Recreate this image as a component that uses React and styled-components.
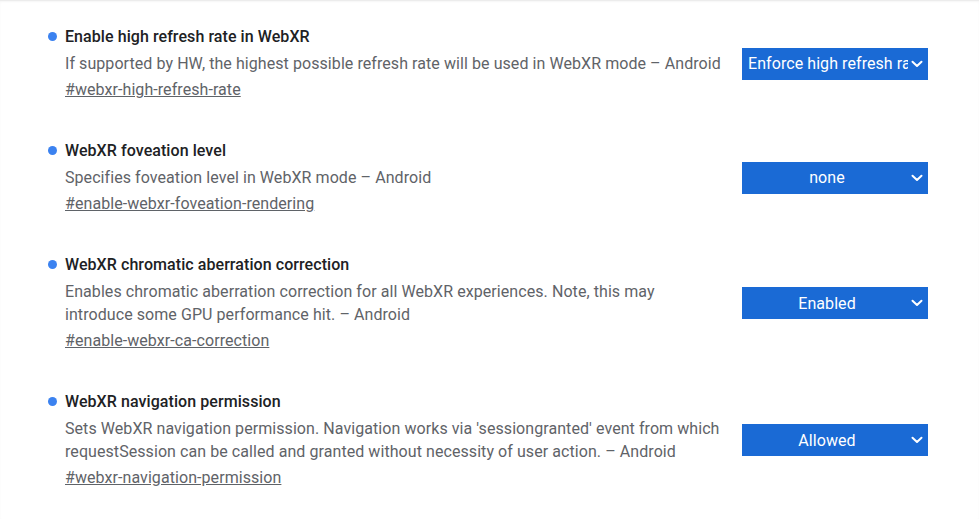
import styled, { createGlobalStyle } from "styled-components";

const GlobalStyle = createGlobalStyle`
  html, body {
    margin: 0;
    padding: 0;
    background: #fff;
  }
  body {
    font-family: Roboto, "Liberation Sans", Arial, sans-serif;
  }
`;

const Page = styled.div`
  width: 979px;
  height: 519px;
  box-sizing: border-box;
  border-top: 1px solid #ececec;
  box-shadow: inset 0 1px 2px rgba(0, 0, 0, 0.04);
  padding: 25px 51px 0 48px;
  overflow: hidden;
`;

const Row = styled.div`
  display: flex;
  align-items: center;
  gap: 20px;
  margin-bottom: 39px;
`;

const Text = styled.div`
  flex: 1;
  min-width: 0;
  letter-spacing: 0.07px;
`;

const Title = styled.div`
  display: flex;
  align-items: center;
  gap: 8px;
  font-size: 16px;
  line-height: 22px;
  font-weight: 500;
  color: #202124;
`;

const Dot = styled.span`
  width: 9px;
  height: 9px;
  margin-top: -2px;
  border-radius: 50%;
  background: #3b82f0;
  flex: none;
`;

const Body = styled.div`
  padding-left: 17px;
`;

const Desc = styled.p`
  margin: 4px 0 0;
  font-size: 16px;
  line-height: 23px;
  color: #5f6368;
`;

const Link = styled.a`
  display: inline-block;
  margin-top: 3px;
  font-size: 16px;
  line-height: 23px;
  color: #5f6368;
  text-decoration: underline;
`;

const Select = styled.div`
  flex: none;
  width: 186px;
  height: 32px;
  box-sizing: border-box;
  background: #1a6ad5;
  color: #fff;
  display: flex;
  align-items: center;
  gap: 3px;
  padding: 0 5px 0 6px;
  font-size: 16px;
  letter-spacing: 0.07px;
`;

const Value = styled.span`
  flex: 1;
  min-width: 0;
  overflow: hidden;
  white-space: nowrap;
  text-align: ${(p) => (p.$left ? "left" : "center")};
  padding-right: ${(p) => (p.$left ? "0" : "2px")};
`;

const Chevron = () => (
  <svg width="12" height="8" viewBox="0 0 12 8" style={{ flex: "none" }}>
    <path
      d="M1.5 1.7L6 6l4.5-4.3"
      fill="none"
      stroke="#fff"
      strokeWidth="2"
      strokeLinecap="round"
      strokeLinejoin="round"
    />
  </svg>
);

const flags = [
  {
    title: "Enable high refresh rate in WebXR",
    desc: "If supported by HW, the highest possible refresh rate will be used in WebXR mode – Android",
    link: "#webxr-high-refresh-rate",
    value: "Enforce high refresh rate",
    left: true,
  },
  {
    title: "WebXR foveation level",
    desc: "Specifies foveation level in WebXR mode – Android",
    link: "#enable-webxr-foveation-rendering",
    value: "none",
  },
  {
    title: "WebXR chromatic aberration correction",
    desc: "Enables chromatic aberration correction for all WebXR experiences. Note, this may introduce some GPU performance hit. – Android",
    link: "#enable-webxr-ca-correction",
    value: "Enabled",
  },
  {
    title: "WebXR navigation permission",
    desc: "Sets WebXR navigation permission. Navigation works via 'sessiongranted' event from which requestSession can be called and granted without necessity of user action. – Android",
    link: "#webxr-navigation-permission",
    value: "Allowed",
  },
];

export default function App() {
  return (
    <Page>
      <GlobalStyle />
      {flags.map((f) => (
        <Row key={f.link}>
          <Text>
            <Title>
              <Dot />
              {f.title}
            </Title>
            <Body>
              <Desc>{f.desc}</Desc>
              <Link href={f.link}>{f.link}</Link>
            </Body>
          </Text>
          <Select>
            <Value $left={f.left}>{f.value}</Value>
            <Chevron />
          </Select>
        </Row>
      ))}
    </Page>
  );
}
